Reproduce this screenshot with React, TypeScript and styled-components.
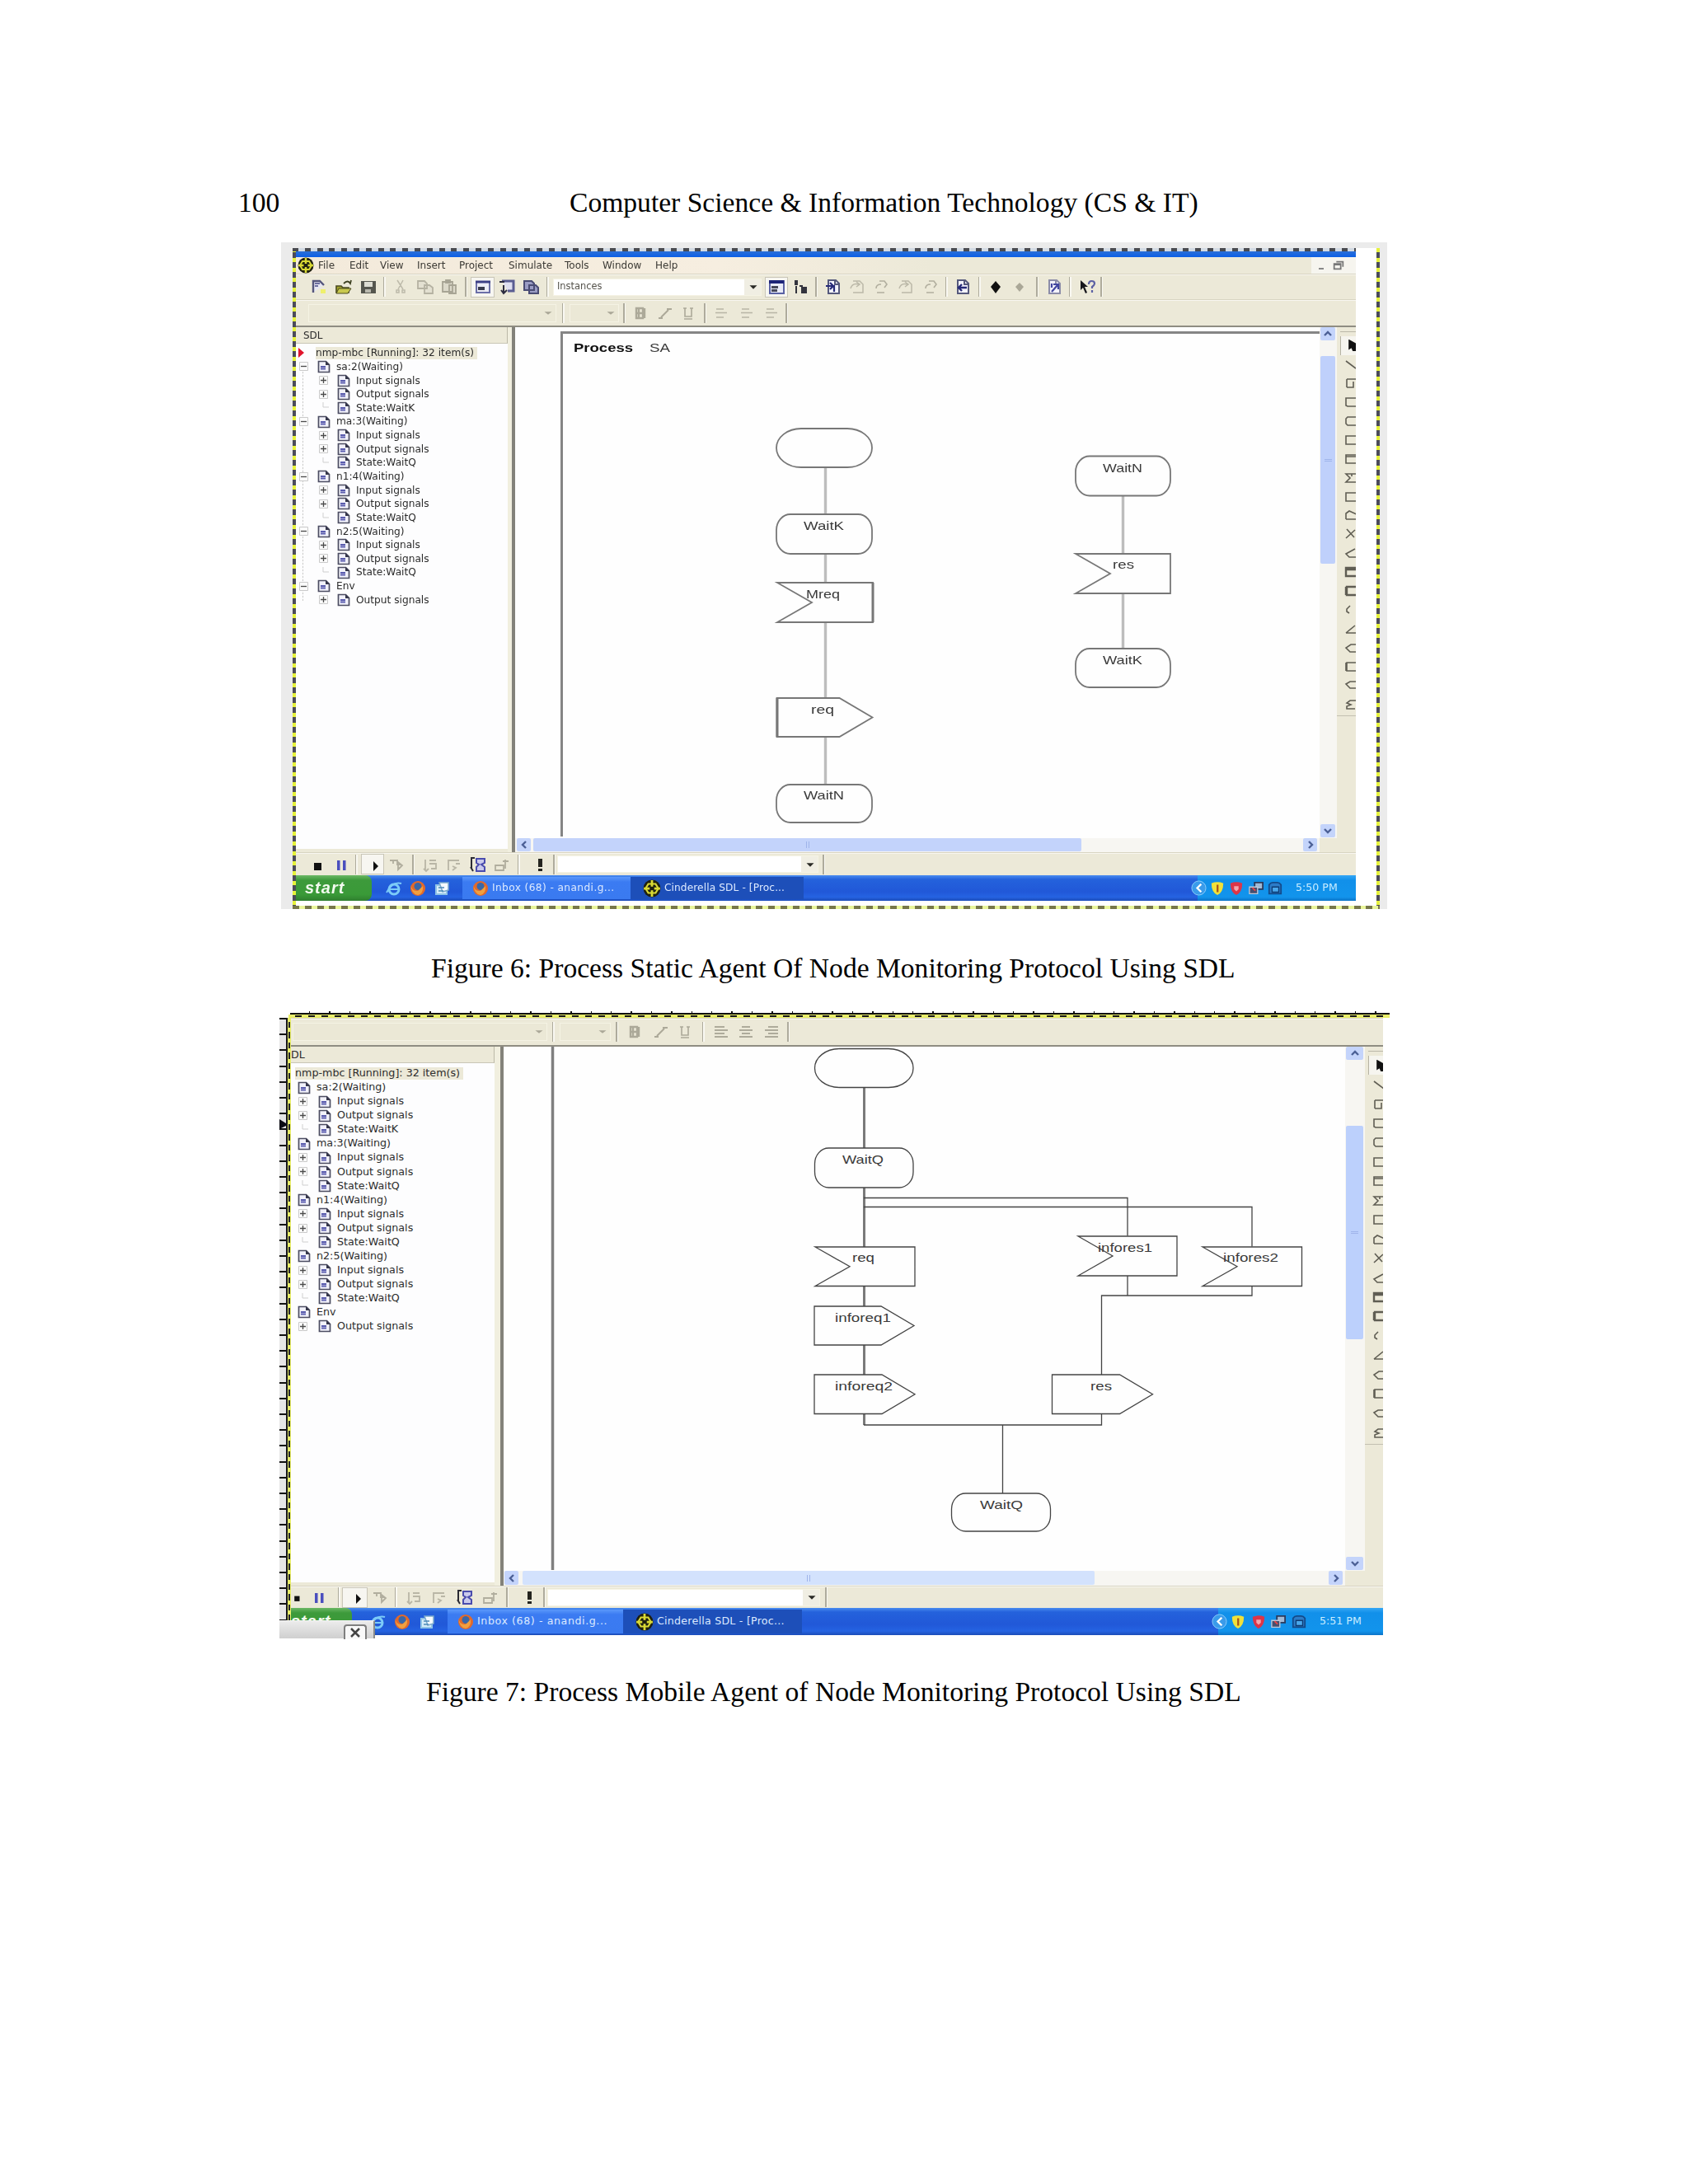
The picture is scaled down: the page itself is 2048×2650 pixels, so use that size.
import { Fragment } from 'react';
import styled, { createGlobalStyle } from 'styled-components';

interface IToolItem {
    kind: 'tool' | 'sep' | 'gap' | 'combo',
    w: number,
    icon?: string,
    pressed?: boolean,
    flat?: boolean,
    text?: string,
}

interface ITreeNode {
    label: string,
    children: string[],
}

interface ITreeLayout {
    top: number,
    pitch: number,
    font: number,
    rootExpander: boolean,
    rootPad: number,
    childPad: number,
    expander: number,
    expanderPad: number,
    textGap: number,
    rootText: number,
}

interface ITaskbarLayout {
    height: number,
    start: number,
    startPad: number,
    quickPad: number,
    quick: number,
    tasks: number[],
    spacing: number[],
    tray: number,
    traySlot: number,
    font: number,
    clock: string,
}

const UI_FONT = '"DejaVu Sans", Verdana, sans-serif';
const BEIGE = '#ece9d8';

const GlobalStyle = createGlobalStyle`
    body {
        margin: 0;
        background: #ffffff;
    }

    * {
        box-sizing: border-box;
    }
`

const Page = styled.main`
    width: 2048px;
    height: 2650px;
    padding-top: 226px;
    background: #ffffff;
    font-family: "Liberation Serif", "Times New Roman", serif;
    font-size: 33.6px;
    line-height: 40px;
    color: #000000;
    overflow: hidden;
`

const RunningHead = styled.header`
    display: flex;
    padding-left: 289px;
    height: 68px;
`

const PageNumber = styled.div`
    width: 402px;
`

const Caption = styled.div<{ $top: number, $height: number, $left: number }>`
    padding-top: ${p => p.$top}px;
    height: ${p => p.$height}px;
    margin-left: ${p => p.$left}px;
    white-space: nowrap;
`

const FigureSix = styled.figure`
    width: 1342px;
    height: 809px;
    margin: 0 0 0 341px;
    padding: 7px 9px 0 14px;
    background: #ebebeb;
    filter: blur(0.6px);
`

const FigureSeven = styled.figure`
    position: relative;
    width: 1348px;
    height: 761px;
    margin: 0 0 0 339px;
`

/* selection outline made of black dashes on yellow */
const Ants = styled.div`
    width: 1319px;
    height: 802px;
    padding: 4px;
    background:
        repeating-linear-gradient(90deg, #4a4b50 0 7px, #d3dbe4 7px 14.8px) 0 0 / 1290px 4px no-repeat,
        repeating-linear-gradient(90deg, #77774a 0 8px, #e9f59a 8px 14.8px) 0 100% / 100% 4px no-repeat,
        repeating-linear-gradient(180deg, #e6f23c 0 5px, #4b4b5a 5px 12px) 0 0 / 4px 100% no-repeat,
        repeating-linear-gradient(180deg, #e6f23c 0 5px, #4b4b5a 5px 12px) 100% 0 / 4px 100% no-repeat,
        #ffffff;
`

const TopRuler = styled.div`
    height: 4px;
    margin-left: 13px;
    width: 1334px;
    background:
        linear-gradient(#111111, #111111) 0 2px / 100% 2px no-repeat,
        repeating-linear-gradient(90deg, transparent 0 23px, #111111 23px 24.4px);
`

const TopAnts = styled.div`
    height: 4px;
    margin-left: 11px;
    width: 1336px;
    background: repeating-linear-gradient(90deg, #e9ee6a 0 8px, #16161c 8px 16px) 0 1px / 100% 2px no-repeat, #e9ee6a;
`

const SideBySide = styled.div`
    display: flex;
`

const SideRuler = styled.div`
    width: 10px;
    height: 735px;
    padding-top: 122px;
    border-right: 2px solid #16161c;
    background: repeating-linear-gradient(180deg, #111111 0 2px, #e6e6e6 2px 19.2px);

    svg {
        display: block;
    }
`

const SideAnts = styled.div`
    width: 4px;
    height: 735px;
    background: repeating-linear-gradient(180deg, #e9ee6a 0 5px, #22222a 5px 12.4px) 1px 0 / 2px 100% no-repeat, #e9ee6a;
`

const AppWindow = styled.div<{ $width: number }>`
    display: flex;
    flex-direction: column;
    width: ${p => p.$width}px;
    background: ${BEIGE};
    font-family: ${UI_FONT};
    line-height: 1;
    color: #2c2c2c;
`

const TitleStrip = styled.div`
    height: 7px;
    background: linear-gradient(#2a6fd8, #0c5fe6);
`

const MenuBar = styled.nav`
    display: flex;
    align-items: center;
    height: 20px;
    padding-left: 2px;
    font-size: 12px;
    background: linear-gradient(90deg, #f3eadb, #f6eee0 40%, #ece9d8 60%);
`

const MenuIcon = styled.div`
    width: 25px;
    height: 20px;
`

const MenuItem = styled.div<{ $w: number }>`
    width: ${p => p.$w}px;
    padding-bottom: 1px;
    color: #3c3a35;
`

const WindowButtons = styled.div`
    display: flex;
    align-items: center;
    gap: 8px;
    margin-left: auto;
    width: 54px;
    height: 20px;
    padding-left: 5px;
    background: #f6f5ef;
`

const Bar = styled.div<{ $height: number }>`
    display: flex;
    align-items: center;
    height: ${p => p.$height}px;
    border-top: 1px solid #d8d4c2;
    box-shadow: inset 0 1px 0 #f8f7f0;
`

const Slot = styled.div<{ $w: number, $pressed?: boolean }>`
    display: flex;
    flex-shrink: 0;
    align-items: center;
    justify-content: center;
    width: ${p => p.$w}px;
    height: 25px;
    border: ${p => p.$pressed ? '1px solid #c9c6b8' : '0'};
    background: ${p => p.$pressed ? '#f7f6f1' : 'transparent'};
`

const Gap = styled.div<{ $w: number }>`
    width: ${p => p.$w}px;
    flex-shrink: 0;
`

const Separator = styled(Gap)`
    height: 24px;
    background: linear-gradient(90deg, #aeab9c 0 1.5px, #f9f8f2 1.5px 3px) 50% 0 / 3px 100% no-repeat;
`

const Combo = styled.div<{ $w: number, $flat?: boolean }>`
    display: flex;
    flex-shrink: 0;
    align-items: center;
    width: ${p => p.$w}px;
    height: ${p => p.$flat ? 22 : 21}px;
    padding-left: 4px;
    border: 1px solid #f5f3e4;
    background: ${p => p.$flat ? '#ebe8d6' : 'linear-gradient(90deg, #ffffff calc(100% - 20px), #f0eee3 0)'};
    font-size: 11.4px;
    color: #55534c;

    svg {
        margin-left: auto;
    }
`

const Body = styled.div<{ $height: number }>`
    display: flex;
    height: ${p => p.$height}px;
    border-top: 2px solid #8f8d82;
`

const SidePanel = styled.aside<{ $w: number, $bottom: number }>`
    width: ${p => p.$w}px;
    margin-bottom: ${p => p.$bottom}px;
    background: #fdfdfe;
`

const PanelHeader = styled.div<{ $pad: number, $font: number }>`
    height: 20px;
    padding: 4px 0 0 ${p => p.$pad}px;
    border-right: 1px solid #bcb9a8;
    border-bottom: 1px solid #c9c6b6;
    background: ${BEIGE};
    font-size: ${p => p.$font}px;
    overflow: hidden;
`

const Splitter = styled.div<{ $w: number }>`
    width: ${p => p.$w}px;
    border-right: 4px solid #83827a;
    background: #f1efdf;
`

const TreeList = styled.div<{ $top: number, $lines: boolean }>`
    padding-top: ${p => p.$top}px;
    background: ${p => p.$lines ? 'repeating-linear-gradient(180deg, #c9c9c9 0 2px, #f4f4f4 2px 4px) 8px 34px / 1px 278px no-repeat' : 'none'};
`

const TreeRow = styled.div<{ $h: number, $pad: number, $font: number }>`
    display: flex;
    align-items: center;
    height: ${p => p.$h}px;
    padding-left: ${p => p.$pad}px;
    font-size: ${p => p.$font}px;
    white-space: nowrap;
`

const Expander = styled.div<{ $w: number, $pad?: number }>`
    display: flex;
    justify-content: center;
    width: ${p => p.$w}px;
    padding-right: ${p => p.$pad || 0}px;
`

const TreeLabel = styled.span<{ $gap: number }>`
    padding-left: ${p => p.$gap}px;
`

const RootLabel = styled.span<{ $gap: number }>`
    margin-left: ${p => p.$gap}px;
    padding: 1px 4px 2px 0;
    background: ${BEIGE};
`

const CanvasColumn = styled.div`
    display: flex;
    flex-direction: column;
    background: #fefefe;

    > svg {
        display: block;
    }
`

const HScroll = styled.div<{ $h: number, $left: number }>`
    display: flex;
    height: ${p => p.$h}px;
    padding: 0 3px 1px ${p => p.$left}px;
    background: #f7f6f2;
`

const VScroll = styled.div<{ $w: number, $bottom: number }>`
    display: flex;
    flex-direction: column;
    width: ${p => p.$w}px;
    padding: 0 2px 1px 1px;
    border-bottom: ${p => p.$bottom}px solid ${BEIGE};
    background: #f7f6f2;
`

const ScrollButton = styled.div`
    display: flex;
    flex-shrink: 0;
    align-items: center;
    justify-content: center;
    min-width: 17px;
    min-height: 16px;
    border-radius: 2px;
    background: #c4d4fb;
`

const Thumb = styled.div<{ $before: number, $size: number, $across?: boolean, $color: string }>`
    display: flex;
    align-items: center;
    justify-content: center;
    flex: 0 0 ${p => p.$size}px;
    margin: ${p => p.$across ? `0 auto 0 ${p.$before}px` : `${p.$before}px 0 auto`};
    border-radius: 2px;
    background: ${p => p.$color};
`

const Grip = styled.div<{ $across?: boolean }>`
    width: ${p => p.$across ? 4 : 9}px;
    height: ${p => p.$across ? 8 : 3}px;
    border: solid #9fb4ea;
    border-width: ${p => p.$across ? '0 1px' : '1px 0'};
`

const Palette = styled.div<{ $w: number }>`
    display: flex;
    flex-direction: column;
    width: ${p => p.$w}px;
    padding-top: 11px;
    overflow: hidden;
    background: linear-gradient(#bbb8a8, #bbb8a8) 4px 5px / 100% 1px no-repeat, ${BEIGE};
`

const PaletteSlot = styled.div<{ $h: number, $pressed?: boolean }>`
    display: flex;
    flex-shrink: 0;
    align-items: center;
    height: ${p => p.$h}px;
    margin-left: 4px;
    padding-left: 4px;
    background: ${p => p.$pressed ? '#f6f5ef' : 'transparent'};
    border-left: 1px solid ${p => p.$pressed ? '#b5b2a4' : 'transparent'};

    svg {
        flex-shrink: 0;
    }
`

const PaletteEnd = styled.div`
    flex-shrink: 0;
    height: 1px;
    margin-top: 2px;
    background: #c3c0b1;
`

const Taskbar = styled.footer<{ $h: number, $font: number }>`
    display: flex;
    height: ${p => p.$h}px;
    font-size: ${p => p.$font}px;
    color: #dce9ff;
    background: linear-gradient(#4a8cf0 0, #2462dc 5px, #2158d8 20px, #2563e2 85%, #1c4cb8);
    white-space: nowrap;
`

const StartButton = styled.div<{ $w: number, $pad: number }>`
    display: flex;
    align-items: center;
    width: ${p => p.$w}px;
    padding: 0 0 2px ${p => p.$pad}px;
    border-radius: 0 8px 8px 0;
    background: linear-gradient(#6cb865 0, #3d9a3b 6px, #3a9a38 75%, #2f7f2f);
    font: italic bold 20px/1 "Liberation Sans", Arial, sans-serif;
    letter-spacing: 1px;
    color: #f2fbef;
`

const TaskButton = styled.div<{ $w: number, $spacing: number, $active?: boolean }>`
    display: flex;
    align-items: center;
    gap: 4px;
    width: ${p => p.$w}px;
    margin: 2px 0;
    padding-left: ${p => p.$active ? 15 : 12}px;
    letter-spacing: ${p => p.$spacing}px;
    background: ${p => p.$active ? '#1d4fb9' : 'linear-gradient(#5a98fb, #3b7bf2 6px, #3a7af0)'};
`

const Quick = styled.div<{ $w: number }>`
    display: flex;
    align-items: center;
    justify-content: center;
    width: ${p => p.$w}px;
`

const Tray = styled.div<{ $w: number }>`
    display: flex;
    align-items: center;
    width: ${p => p.$w}px;
    margin-left: auto;
    background: linear-gradient(#35a7f5 0, #1190ea 6px, #1294ec 85%, #0c74c8);

    > :first-child {
        margin-left: -10px;
        width: 22px;
    }
`

const Clock = styled.div`
    margin-left: 13px;
    font-size: 12.6px;
    color: #c9ecff;
`

const ClosePopup = styled.div`
    position: absolute;
    left: 0;
    bottom: 0;
    display: flex;
    justify-content: flex-end;
    width: 116px;
    height: 22px;
    padding: 4px 8px 0 0;
    border-top: 1px solid #f4f4f4;
    border-right: 2px solid #8a8a8a;
    background: linear-gradient(#ececec, #cfcfcf);
`

const CloseButton = styled.div`
    display: flex;
    align-items: center;
    justify-content: center;
    width: 28px;
    height: 18px;
    border: 2px solid #7f7f7f;
    border-bottom: 0;
    border-radius: 4px 4px 0 0;
    background: #f8f8f8;
`

const page = (ink: string) => (
    <>
        <path d="M4 2h9l4 4v12H4z" fill="#f3f3fb" stroke={ink} strokeWidth="2" />
        <path d="M12 2v5h5" fill="none" stroke={ink} strokeWidth="2" />
    </>
)

const art: Record<string, any> = {
    newDoc: <>
        <path d="M3 17V3h8l5 5" fill="#e6e6f2" stroke="#55567c" strokeWidth="2.4" />
        <path d="M5 6h6M5 9h4" stroke="#6d6ea0" strokeWidth="2" />
        <path d="M12 13h6v5h-6z" fill="#eff06c" />
    </>,
    open: <>
        <path d="M1 9h6l2 2h7v6H1z" fill="#a3a42c" stroke="#4a4a20" strokeWidth="1.6" />
        <path d="M4 12h15l-4 6H1z" fill="#c8c84e" stroke="#4a4a20" strokeWidth="1" />
        <path d="M10 6q5-5 8 0l1-4" fill="none" stroke="#3d4020" strokeWidth="1.8" />
    </>,
    save: <>
        <path d="M1 3h18v15H1z" fill="#55564e" />
        <path d="M5 4h10v6H5z" fill="#dcdcd2" />
        <path d="M6 13h7v4H6z" fill="#b9b9ae" />
    </>,
    cut: <path d="M6 2l7 11M13 2L7 13M5 14h3v3H5zM12 14h3v3h-3z" stroke="#bdbaaa" strokeWidth="1.5" fill="none" />,
    copy: <path d="M1 3h8l3 3v6H1zM9 8h6l4 3v7H9z" fill="#e3e0d1" stroke="#b5b2a2" strokeWidth="1.8" />,
    paste: <path d="M2 4h12v12H2zM6 2h5v3H6zM10 8h8v10h-8z" fill="#dcd9ca" stroke="#a7a494" strokeWidth="1.8" />,
    panel: <>
        <path d="M2 4h16v13H2z" fill="#ececf6" stroke="#6b6fa8" strokeWidth="2" />
        <path d="M1 4h18" stroke="#3c3f86" strokeWidth="3" />
        <path d="M4 10h8v4H4z" fill="#383a4c" />
    </>,
    panelDown: <>
        <path d="M4 3h14v12h-7" fill="#dfdff0" stroke="#5a5d92" strokeWidth="3" />
        <path d="M1 4h6M6 8v10M3 14l3 4 4-4" fill="none" stroke="#2c2c40" strokeWidth="2" />
    </>,
    windows: <path d="M2 3h9l3 3v8H2zM8 8h8l3 3v7H8z" fill="#9a9cc4" stroke="#4a4c74" strokeWidth="2" />,
    table: <>
        <path d="M2 3h17v15H2z" fill="#e9ebf8" stroke="#5a62a4" strokeWidth="2" />
        <path d="M1 4h18" stroke="#1d2478" strokeWidth="4" />
        <path d="M4 9h8v3H4zM4 13h7v3H4z" fill="#46485a" />
    </>,
    bars: <path d="M3 2h4v6H3zM4 9h2v9H4zM9 8h4v2H9zM11 10h7v8h-7z" fill="#33343e" />,
    docArrow: <>{page('#55597c')}<path d="M1 9h8M6 5l4 4-4 4M11 8v8" stroke="#262a78" strokeWidth="2.2" fill="none" /></>,
    docBack: <>{page('#55597c')}<path d="M15 11H5M9 7l-4 4 4 4" stroke="#262a78" strokeWidth="2.4" fill="none" /></>,
    docUp: <>{page('#8b8ca8')}<path d="M7 16l7-8M9 7h6v6M7 6v5" stroke="#4246a0" strokeWidth="2.2" fill="none" /></>,
    stepA: <path d="M5 3h8l4 4v10H5M2 12q2-7 10-5M9 4l4 3-4 3" fill="none" stroke="#bbb8a8" strokeWidth="1.5" />,
    stepB: <path d="M8 3h6l3 4-3 4M4 12q0-5 6-5M5 17h9" fill="none" stroke="#b1ae9e" strokeWidth="1.6" />,
    diamond: <path d="M10 3l6 7-6 8-6-8z" fill="#111111" />,
    diamondDim: <path d="M10 5l5 5-5 6-5-6z" fill="#aaa797" />,
    help: <>
        <path d="M2 2v12l3-3 3 7 2-1-3-7h4z" fill="#16161c" />
        <path d="M12 7q0-4 3.500-4t3.500 3q0 2-3 4v2M16 14v3" fill="none" stroke="#5c61a4" strokeWidth="2.2" />
    </>,
    arrowDown: <path d="M5 8h10l-5 5z" fill="#2a2a26" />,
    arrowDim: <path d="M5 8h10l-5 4z" fill="#aaa797" />,
    bold: <path d="M4 4h8v12H4zM7 4v12M4 10h8M14 4v12" fill="none" stroke="#aca999" strokeWidth="2.4" />,
    italic: <path d="M2 16h5M5 15L14 6M12 5h6" stroke="#aca999" strokeWidth="2" fill="none" />,
    underline: <path d="M5 4v10h8V4M3 4h4M11 4h4M4 17h10" stroke="#aca999" strokeWidth="1.6" fill="none" />,
    alignLeft: <path d="M2 4h12M2 8h16M2 12h12M2 16h16" stroke="#aeab9b" strokeWidth="1.8" />,
    alignMid: <path d="M5 4h10M2 8h16M5 12h10M2 16h16" stroke="#aeab9b" strokeWidth="1.8" />,
    alignRight: <path d="M6 4h12M2 8h16M6 12h12M2 16h16" stroke="#aeab9b" strokeWidth="1.8" />,
    dash: <path d="M4 5h9M3 9.500h14M4 15h9" stroke="#b8b5a5" strokeWidth="1.6" />,
    stop: <path d="M6 8h9v9H6z" fill="#111111" />,
    pause: <path d="M5 5h3.500v12H5zM12 5h3.500v12H12z" fill="#4b4fbe" />,
    play: <path d="M11 6l6 6-6 6z" fill="#111111" />,
    step: <path d="M2 5h9v5h4M6 4v5M12 7v9l5-5z" fill="none" stroke="#b1ae9e" strokeWidth="1.8" />,
    into: <path d="M4 4v13M2 15l3 3 3-3M9 5h8M9 9h8v6h-6" fill="none" stroke="#b9b6a6" strokeWidth="1.8" />,
    over: <path d="M3 17V5h13M12 9h5M8 12l4 2-4 3" fill="none" stroke="#b9b6a6" strokeWidth="1.8" />,
    trace: <>
        <path d="M6 2H2v13M1 13l3 5" fill="none" stroke="#2a2a34" strokeWidth="2" />
        <path d="M8 3h10v5l-4 2 4 3v5H8v-5l3-3-3-2z" fill="#c9c9ec" stroke="#4a4cae" strokeWidth="2" />
    </>,
    out: <path d="M2 11h10v6H2zM14 15V4M11 6h7" fill="none" stroke="#b1ae9e" strokeWidth="1.8" />,
    bang: <path d="M8 3h5v10H8zM8 15h5v3H8z" fill="#24241f" />,
    ie: <>
        <circle cx="10" cy="11" r="6" fill="none" stroke="#7ccbf8" strokeWidth="3" />
        <path d="M5 11h11M1 15Q8 1 19 4" stroke="#7ccbf8" strokeWidth="2" fill="none" />
    </>,
    firefox: <>
        <circle cx="10" cy="10" r="9" fill="#e2692b" />
        <circle cx="10" cy="7.500" r="4.500" fill="#3967a8" />
        <path d="M1 4q1 10 9 9l6-6q1 9-6 11-8-1-9-14z" fill="#f0a040" />
    </>,
    mail: <>
        <path d="M3 6h13v11H3z" fill="#d6ecf8" stroke="#8fc3e6" strokeWidth="2" />
        <path d="M7 3h11v9l-7 2z" fill="#f6fbff" stroke="#7aa9cc" strokeWidth="1.500" />
        <path d="M6 9h7M6 13h6" fill="none" stroke="#4e8bb8" strokeWidth="1.500" />
    </>,
    sdl: <>
        <circle cx="10" cy="10" r="9.500" fill="#1f2010" />
        <path d="M10 1v18M1 10h18" stroke="#d9d934" strokeWidth="2.500" />
        <path d="M6 5h8l3 5-3 5H6l-3-5z" fill="none" stroke="#d9d934" strokeWidth="2" />
        <path d="M7.500 8h5v4h-5z" fill="#1f2010" />
    </>,
    chevron: <>
        <circle cx="10" cy="10" r="9" fill="#3a9bea" stroke="#8fd0fb" />
        <path d="M13 5l-5 5 5 5" fill="none" stroke="#ffffff" strokeWidth="2.500" />
    </>,
    shieldYellow: <><path d="M2 3q8-3 16 0 0 12-8 16Q2 15 2 3z" fill="#f0e13a" /><path d="M9 5h2.500v10H9z" fill="#a3521c" /></>,
    shieldRed: <><path d="M2 3q8-3 16 0 0 12-8 16Q2 15 2 3z" fill="#dc3548" /><path d="M7 7h6v4l-3 3-3-3z" fill="#f5a5ad" /></>,
    network: <><path d="M8 2h11v9H8z" fill="#9fb9d6" stroke="#2b3a5c" strokeWidth="2" /><path d="M1 8h11v9H1z" fill="#454f70" stroke="#c0c8d8" strokeWidth="1.500" /><path d="M5 9l4 4" stroke="#e44" strokeWidth="2" /></>,
    modem: <><path d="M2 5q2-3 5-3h6q3 0 5 3v12H2z" fill="#2c7cc8" stroke="#134a8a" strokeWidth="2" /><path d="M6 8h9v7H6z" fill="#4aa8ec" stroke="#0e3c74" strokeWidth="1.500" /></>,
}

const Icon = ({ name, size = 20 }: { name: string, size?: number }) => (
    <svg width={size} height={size} viewBox="0 0 20 20" aria-hidden="true">{art[name]}</svg>
)

const t = (w: number, icon: string, pressed?: boolean): IToolItem => ({ kind: 'tool', w, icon, pressed });
const s = (w: number): IToolItem => ({ kind: 'sep', w });
const g = (w: number): IToolItem => ({ kind: 'gap', w });
const c = (w: number, flat?: boolean, text?: string): IToolItem => ({ kind: 'combo', w, flat, text });

const mainTools = [
    g(13), t(30, 'newDoc'), t(30, 'open'), t(29, 'save'), s(10), t(30, 'cut'), t(29, 'copy'), t(29, 'paste'), s(12),
    t(29, 'panel', true), t(30, 'panelDown'), t(28, 'windows'), s(13), c(253, false, 'Instances'), g(4),
    t(28, 'table', true), t(29, 'bars'), s(11), t(29, 'docArrow'), t(29, 'stepA'), t(30, 'stepB'), t(30, 'stepA'),
    t(29, 'stepB'), s(10), t(29, 'docBack'), s(12), t(28, 'diamond'), t(29, 'diamondDim'), s(14), t(28, 'docUp'),
    s(11), t(29, 'help'), s(7),
];

const formatSix = [
    g(15), c(301, true), s(16), c(60, true), s(12), t(29, 'bold'), t(29, 'italic'), t(30, 'underline'), s(9),
    t(30, 'dash'), t(31, 'dash'), t(30, 'dash'), s(6),
];

const formatSeven = [
    g(2), c(309, true), s(15), c(62, true), s(15), t(30, 'bold'), t(31, 'italic'), t(30, 'underline'), s(12),
    t(31, 'alignLeft'), t(30, 'alignMid'), t(31, 'alignRight'), s(10),
];

const runSix = [
    g(11), t(30, 'stop'), t(27, 'pause'), s(11), t(28, 'play', true), t(30, 'step'), s(11), t(29, 'into'),
    t(29, 'over'), t(30, 'trace'), t(28, 'out'), s(12), g(7), t(26, 'bang'), s(8), c(317), s(12),
];

const runSeven = [
    t(14, 'stop'), t(40, 'pause'), s(8), t(31, 'play', true), t(29, 'step'), s(11), t(32, 'into'), t(30, 'over'),
    t(32, 'trace'), t(29, 'out'), s(12), g(7), t(28, 'bang'), s(8), c(331), s(14),
];

const menu: [string, number][] = [
    ['File', 38], ['Edit', 37], ['View', 45], ['Insert', 51], ['Project', 60], ['Simulate', 68], ['Tools', 46],
    ['Window', 64], ['Help', 40],
];

const tree: ITreeNode[] = [
    { label: 'sa:2(Waiting)', children: ['Input signals', 'Output signals', 'State:WaitK'] },
    { label: 'ma:3(Waiting)', children: ['Input signals', 'Output signals', 'State:WaitQ'] },
    { label: 'n1:4(Waiting)', children: ['Input signals', 'Output signals', 'State:WaitQ'] },
    { label: 'n2:5(Waiting)', children: ['Input signals', 'Output signals', 'State:WaitQ'] },
    { label: 'Env', children: ['Output signals'] },
];

const ToolRow = ({ items, height }: { items: IToolItem[], height: number }) => (
    <Bar $height={height}>
        {items.map((item, i) => {
            if (item.kind === 'sep') return <Separator key={i} $w={item.w} />
            if (item.kind === 'gap') return <Gap key={i} $w={item.w} />
            if (item.kind === 'combo') return (
                <Combo key={i} $w={item.w} $flat={item.flat}>
                    {item.text}
                    <Icon name={item.flat ? 'arrowDim' : 'arrowDown'} size={18} />
                </Combo>
            )
            return <Slot key={i} $w={item.w} $pressed={item.pressed}><Icon name={item.icon!} /></Slot>
        })}
    </Bar>
)

const Box = ({ open }: { open?: boolean }) => (
    <svg width="13" height="13" viewBox="0 0 13 13">
        <path d="M1.500 1.500h10v10h-10z" fill="#fbfbfb" stroke="#cacaca" />
        <path d={open ? 'M3 6.500h7' : 'M3 6.500h7M6.500 3v7'} stroke="#4c4c4c" strokeWidth="1.3" />
    </svg>
)

const PageIcon = () => (
    <svg width="16" height="16" viewBox="0 0 16 16">
        <path d="M1.500 1.500h9l4 4v9h-13z" fill="#f1f1fa" stroke="#4c4d62" strokeWidth="1.7" />
        <path d="M10 1v5h5z" fill="#35364a" />
        <path d="M4 8h6M4 10.500h6" stroke="#5a5cae" strokeWidth="1.8" />
    </svg>
)

const Tree = ({ l }: { l: ITreeLayout }) => (
    <TreeList $top={l.top} $lines={l.rootExpander}>
        <TreeRow $h={l.pitch} $pad={0} $font={l.font}>
            {l.rootExpander && (
                <svg width="10" height="12" viewBox="0 0 10 12"><path d="M3 0l7 6-7 6z" fill="#e0142c" /></svg>
            )}
            <RootLabel $gap={l.rootText}>nmp-mbc [Running]: 32 item(s)</RootLabel>
        </TreeRow>
        {tree.map(node => (
            <Fragment key={node.label}>
                <TreeRow $h={l.pitch} $pad={l.rootPad} $font={l.font}>
                    {l.rootExpander && <Expander $w={26} $pad={8}><Box open /></Expander>}
                    <PageIcon />
                    <TreeLabel $gap={l.textGap}>{node.label}</TreeLabel>
                </TreeRow>
                {node.children.map(child => (
                    <TreeRow key={child} $h={l.pitch} $pad={l.childPad} $font={l.font}>
                        <Expander $w={l.expander} $pad={l.expanderPad}>
                            {child.startsWith('State')
                                ? <svg width="13" height="13"><path d="M6 0v6h7" fill="none" stroke="#cfcfcf" /></svg>
                                : <Box />}
                        </Expander>
                        <PageIcon />
                        <TreeLabel $gap={l.textGap}>{child}</TreeLabel>
                    </TreeRow>
                ))}
            </Fragment>
        ))}
    </TreeList>
)

const chevrons: Record<string, string> = {
    up: 'M2 8l4-4 4 4',
    down: 'M2 4l4 4 4-4',
    left: 'M8 2L4 6l4 4',
    right: 'M4 2l4 4-4 4',
}

const Scroller = ({ dir }: { dir: string }) => (
    <ScrollButton>
        <svg width="12" height="12" viewBox="0 0 12 12">
            <path d={chevrons[dir]} fill="none" stroke="#4c6096" strokeWidth="2.4" />
        </svg>
    </ScrollButton>
)

const paletteShapes = [
    'M6 1v10l3-2 2 5 4 0V6z', 'M2 3l12 9', 'M3 2h12M3 2v10M3 12h8V5', 'M15 2H2v9l2 1h11', 'M15 2H4L2 4v6l2 2h11',
    'M15 2H2v10h13', 'M15 2H2v10h13M2 4h13', 'M15 2H2l5 5-5 5h13M9 2v3', 'M15 2H2v10h13', 'M2 12V5l4-3 9 4M2 12h13',
    'M3 1l9 10M13 2L2 12', 'M13 2L2 8l4 4h9', 'M15 2H2v10h13M2 4h13', 'M15 2H3v10h12M2 2v10', 'M7 2L3 6v3l3 2',
    'M2 12h13M2 12L13 3', 'M15 3H8L2 7l5 5h8', 'M15 2H3v10h12M2 2v10', 'M15 3H7L2 6l5 5h8', 'M15 3H7L3 6l5 2-5 2v3h10',
];

const PaletteBar = ({ width, pitch }: { width: number, pitch: number }) => (
    <Palette $w={width}>
        {paletteShapes.map((d, i) => (
            <PaletteSlot key={i} $h={pitch} $pressed={i === 0}>
                <svg width="15" height="14" viewBox="0 0 15 14">
                    <path d={d} fill={i === 0 ? '#111111' : 'none'} stroke={i === 0 ? '#111111' : '#5f5d53'} strokeWidth={i > 11 && i < 14 ? 2.4 : 1.6} />
                </svg>
            </PaletteSlot>
        ))}
        <PaletteEnd />
    </Palette>
)

const TaskbarRow = ({ l }: { l: ITaskbarLayout }) => (
    <Taskbar $h={l.height} $font={l.font}>
        <StartButton $w={l.start} $pad={l.startPad}>start</StartButton>
        <Gap $w={l.quickPad} />
        {['ie', 'firefox', 'mail'].map(name => <Quick key={name} $w={l.quick}><Icon name={name} /></Quick>)}
        <Gap $w={10} />
        <TaskButton $w={l.tasks[0]} $spacing={l.spacing[0]}><Icon name="firefox" />Inbox (68) - anandi.g...</TaskButton>
        <TaskButton $w={l.tasks[1]} $spacing={l.spacing[1]} $active>
            <Icon name="sdl" size={22} />Cinderella SDL - [Proc...
        </TaskButton>
        <Tray $w={l.tray}>
            <Quick $w={22}><Icon name="chevron" size={19} /></Quick>
            {['shieldYellow', 'shieldRed', 'network', 'modem'].map(name => (
                <Quick key={name} $w={l.traySlot}><Icon name={name} size={18} /></Quick>
            ))}
            <Clock>{l.clock}</Clock>
        </Tray>
    </Taskbar>
)

/* flow chart symbols */
const State = ({ x, y, w, h = 48, round }: { x: number, y: number, w: number, h?: number, round?: boolean }) => (
    <rect x={x} y={y} width={w} height={h} rx={round ? 30 : 17} ry={round ? 24 : 19} />
)

const Input = ({ x, y, w, h = 48 }: { x: number, y: number, w: number, h?: number }) => (
    <path d={`M${x} ${y}h${w}v${h}h${-w}l42 ${-h / 2}z`} />
)

const Output = ({ x, y, w, h = 47 }: { x: number, y: number, w: number, h?: number }) => (
    <path d={`M${x} ${y}h${w - 40}l40 ${h / 2}l-40 ${h / 2}h${40 - w}z`} />
)

const Label = ({ x, y, w, children }: { x: number, y: number, w: number, children: string }) => (
    <text x={x} y={y} textLength={w} lengthAdjust="spacingAndGlyphs">{children}</text>
)

const DiagramSvg = styled.svg<{ $ink: string, $line: number }>`
    fill: none;
    stroke: ${p => p.$ink};
    stroke-width: ${p => p.$line};

    text {
        fill: #3a3a3a;
        stroke: none;
        font: 15px "Liberation Sans", Arial, sans-serif;
    }

    text.heading {
        fill: #111111;
        font-weight: bold;
    }
`

const StaticAgent = () => (
    <DiagramSvg $ink="#777777" $line={1.8} width="976" height="620" viewBox="625 397 976 620">
        <path d="M681.500 1015V403.500H1601" strokeWidth="3" stroke="#858585" />
        <g strokeWidth="3.400" stroke="#bdbdbd">
            <path d="M1001.500 568v56M1001.500 672v34M1001.500 755v92M1001.500 895v57" />
            <path d="M1362.500 601v70M1362.500 720v67" />
        </g>
        <State x={942} y={520} w={116} h={47} round />
        <State x={942} y={624} w={116} />
        <Input x={943} y={707} w={116} />
        <path d="M1059 707v48" strokeWidth="3" />
        <Output x={942.5} y={847} w={116} />
        <path d="M943 847v47" strokeWidth="3" />
        <State x={942} y={952} w={116} h={46} />
        <State x={1305} y={553.5} w={115} />
        <Input x={1305} y={672} w={115} />
        <State x={1305} y={787} w={115} h={47} />
        <text className="heading" x="696" y="427" textLength="72" lengthAdjust="spacingAndGlyphs">Process</text>
        <Label x={788} y={427} w={25}>SA</Label>
        <Label x={975} y={643} w={49}>WaitK</Label>
        <Label x={978} y={726} w={41}>Mreq</Label>
        <Label x={984} y={866} w={28}>req</Label>
        <Label x={975} y={970} w={49}>WaitN</Label>
        <Label x={1338} y={573} w={48}>WaitN</Label>
        <Label x={1350} y={690} w={26}>res</Label>
        <Label x={1338} y={806} w={48}>WaitK</Label>
    </DiagramSvg>
)

const MobileAgent = () => (
    <DiagramSvg $ink="#444444" $line={1.3} width="1021" height="636" viewBox="611 1270 1021 636">
        <path d="M670.500 1270v635" strokeWidth="3.500" stroke="#7f7f7f" />
        <path d="M1048.500 1320v73M1048.500 1441v72M1048.500 1560v25M1048.500 1632v36M1048.500 1716v13" strokeWidth="3" stroke="#7a7a7a" />
        <path d="M1048 1453.500h320v46M1048 1464.500h471v48" />
        <path d="M1368 1548v24M1519 1560v12H1336.500v96M1336.500 1716v13H1048M1216.500 1729v83" />
        <State x={988.5} y={1272.5} w={119.5} h={47} round />
        <State x={988.5} y={1393} w={119.5} />
        <Input x={989} y={1513} w={121} h={47.5} />
        <Output x={988} y={1585} w={121} />
        <Output x={988} y={1668} w={122} h={47.5} />
        <Input x={1308} y={1500} w={120} />
        <Input x={1459} y={1513} w={120.5} h={47.5} />
        <Output x={1276.5} y={1668} w={122} h={47.5} />
        <State x={1154.5} y={1812} w={120} h={46} />
        <Label x={1022} y={1412} w={50}>WaitQ</Label>
        <Label x={1034} y={1531} w={27}>req</Label>
        <Label x={1013} y={1604} w={68}>inforeq1</Label>
        <Label x={1013} y={1687} w={70}>inforeq2</Label>
        <Label x={1332} y={1519} w={66}>infores1</Label>
        <Label x={1484} y={1531} w={67}>infores2</Label>
        <Label x={1323} y={1687} w={26}>res</Label>
        <Label x={1189} y={1831} w={52}>WaitQ</Label>
    </DiagramSvg>
)

const treeSix: ITreeLayout = {
    top: 3, pitch: 16.65, font: 12.2, rootExpander: true, rootPad: 0, childPad: 16, expander: 34, expanderPad: 0,
    textGap: 7, rootText: 14,
};

const treeSeven: ITreeLayout = {
    top: 4, pitch: 17.05, font: 12.7, rootExpander: false, rootPad: 8, childPad: 0, expander: 33, expanderPad: 5,
    textGap: 7, rootText: 5,
};

const taskbarSix: ITaskbarLayout = {
    height: 31, start: 92, startPad: 11, quickPad: 12, quick: 29.3, tasks: [204, 210], spacing: [0.4, 0.1], tray: 192,
    traySlot: 23.5, font: 12.2, clock: '5:50 PM',
};

const taskbarSeven: ITaskbarLayout = {
    height: 33, start: 74, startPad: 0, quickPad: 16, quick: 30, tasks: [213, 217], spacing: [0.6, 0.25], tray: 200,
    traySlot: 24.5, font: 12.6, clock: '5:51 PM',
};

export default function App() {
    return (
        <>
            <GlobalStyle />
            <Page>
                <RunningHead>
                    <PageNumber>100</PageNumber>
                    <div>Computer Science &amp; Information Technology (CS &amp; IT)</div>
                </RunningHead>

                <FigureSix>
                    <Ants>
                        <AppWindow $width={1286}>
                            <TitleStrip />
                            <MenuBar>
                                <MenuIcon><Icon name="sdl" /></MenuIcon>
                                {menu.map(([label, w]) => <MenuItem key={label} $w={w}>{label}</MenuItem>)}
                                <WindowButtons>
                                    <svg width="12" height="14"><path d="M4 11h6" stroke="#888" strokeWidth="2" /></svg>
                                    <svg width="16" height="16" viewBox="0 0 18 16">
                                        <path d="M6 3h9v7M3 6h9v7H3zM3 7h9" fill="none" stroke="#777" strokeWidth="2" />
                                    </svg>
                                </WindowButtons>
                            </MenuBar>
                            <ToolRow items={mainTools} height={31} />
                            <ToolRow items={formatSix} height={32} />
                            <Body $height={639}>
                                <SidePanel $w={257} $bottom={4}>
                                    <PanelHeader $pad={9} $font={12}>SDL</PanelHeader>
                                    <Tree l={treeSix} />
                                </SidePanel>
                                <Splitter $w={9} />
                                <CanvasColumn>
                                    <StaticAgent />
                                    <HScroll $h={17} $left={2}>
                                        <Scroller dir="left" />
                                        <Thumb $before={3} $size={665} $across $color="#c3d3fb"><Grip $across /></Thumb>
                                        <Scroller dir="right" />
                                    </HScroll>
                                </CanvasColumn>
                                <VScroll $w={21} $bottom={17}>
                                    <Scroller dir="up" />
                                    <Thumb $before={19} $size={252} $color="#bfd0fb"><Grip /></Thumb>
                                    <Scroller dir="down" />
                                </VScroll>
                                <PaletteBar width={23} pitch={22.9} />
                            </Body>
                            <ToolRow items={runSix} height={28} />
                            <TaskbarRow l={taskbarSix} />
                        </AppWindow>
                    </Ants>
                </FigureSix>

                <Caption $top={52} $height={124} $left={523}>
                    Figure 6: Process Static Agent Of Node Monitoring Protocol Using SDL
                </Caption>

                <FigureSeven>
                    <TopRuler />
                    <TopAnts />
                    <SideBySide>
                        <SideRuler>
                            {/* row marker */}
                            <svg width="8" height="14" viewBox="0 0 8 14">
                                <path d="M0 1l8 5v3l-8 4z" fill="#0c0c14" />
                            </svg>
                        </SideRuler>
                        <SideAnts />
                        <AppWindow $width={1325}>
                            <ToolRow items={formatSeven} height={33} />
                            <Body $height={656}>
                                <SidePanel $w={247} $bottom={4}>
                                    <PanelHeader $pad={0} $font={12.6}>DL</PanelHeader>
                                    <Tree l={treeSeven} />
                                </SidePanel>
                                <Splitter $w={11} />
                                <CanvasColumn>
                                    <MobileAgent />
                                    <HScroll $h={18} $left={1}>
                                        <Scroller dir="left" />
                                        <Thumb $before={5} $size={694} $across $color="#d3e2fd"><Grip $across /></Thumb>
                                        <Scroller dir="right" />
                                    </HScroll>
                                </CanvasColumn>
                                <VScroll $w={24} $bottom={18}>
                                    <Scroller dir="up" />
                                    <Thumb $before={80} $size={259} $color="#bcd0fc"><Grip /></Thumb>
                                    <Scroller dir="down" />
                                </VScroll>
                                <PaletteBar width={22} pitch={23.45} />
                            </Body>
                            <ToolRow items={runSeven} height={27} />
                            <TaskbarRow l={taskbarSeven} />
                        </AppWindow>
                    </SideBySide>
                    <ClosePopup>
                        <CloseButton>
                            <svg width="12" height="12"><path d="M1 1l10 10M11 1L1 11" stroke="#444" strokeWidth="2.500" /></svg>
                        </CloseButton>
                    </ClosePopup>
                </FigureSeven>

                <Caption $top={45} $height={100} $left={517}>
                    Figure 7: Process Mobile Agent of Node Monitoring Protocol Using SDL
                </Caption>
            </Page>
        </>
    )
}
